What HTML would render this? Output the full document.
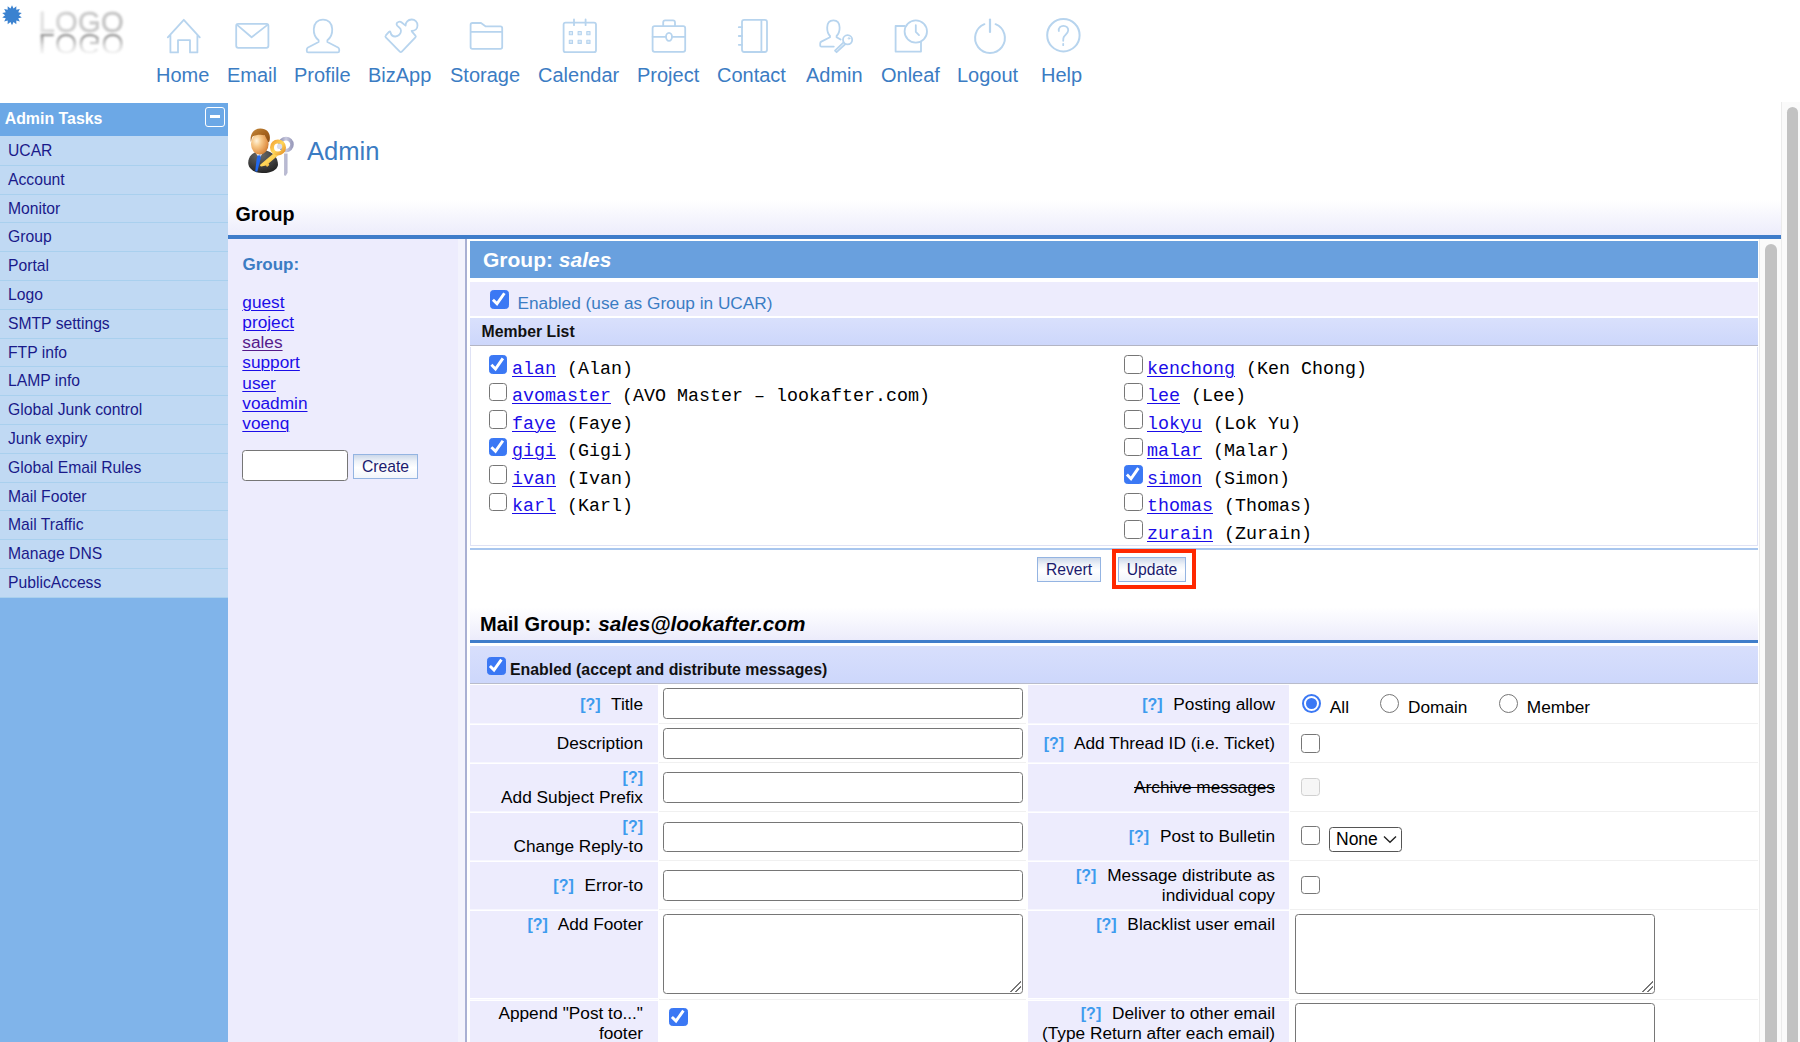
<!DOCTYPE html>
<html><head><meta charset="utf-8"><title>Admin</title>
<style>
*{box-sizing:border-box;margin:0;padding:0}
html,body{width:1800px;height:1042px;overflow:hidden;background:#fff;font-family:"Liberation Sans",sans-serif;}
body{position:relative}
.abs{position:absolute}
#nav .it{position:absolute;top:63.5px;font-size:20px;line-height:22px;color:#3b7cc3;white-space:nowrap}
#nav svg{position:absolute;fill:none;stroke:#b7d4ee;stroke-width:1.8;stroke-linejoin:round;stroke-linecap:round;overflow:visible}
#side{position:absolute;left:0;top:103px;width:228px;height:939px;background:linear-gradient(#c0d9f3,#c0d9f3) 0 0/100% 40px no-repeat,#80b4ea}
#side .hd{height:33.4px;background:#6ca8e6;color:#fff;font-weight:bold;font-size:15.9px;line-height:32px;padding-left:4.7px;position:relative;margin-bottom:0.6px}
#side .hd i{position:absolute;left:205px;top:4.3px;width:20px;height:20px;border:1.5px solid #fff;border-radius:3px}
#side .hd i:after{content:"";position:absolute;left:3.5px;top:7px;width:10px;height:2.5px;background:#fff}
#side .i{height:28.8px;background:#c0d9f3;border-bottom:1.5px solid #a9d0ee;color:#1a1a8a;font-size:15.7px;line-height:28px;padding-left:8px}
a{color:#1b0de8;text-decoration:underline;text-decoration-thickness:1.4px;text-underline-offset:2px}
a.v{color:#551a8b}
.cb{position:absolute;width:18.6px;height:18.6px;border:1.5px solid #767676;border-radius:3.4px;background:#fff}
.cb.on{background:#3b78f4;border-color:#3b78f4}
.cb.on:after{content:"";position:absolute;left:-1.5px;top:-1.5px;width:18.6px;height:18.6px;background:#fff;clip-path:polygon(12.8% 59.3%,41.4% 87.9%,86.5% 23.8%,73.7% 14.9%,39.3% 63.7%,23.8% 48.3%)}
.cb.dis{border-color:#d0d0d0;background:#f6f6f6}
.rd{position:absolute;width:19px;height:19px;border:1.5px solid #767676;border-radius:50%;background:#fff}
.rd.on{border-color:#3b78f4;border-width:2px}
.rd.on:after{content:"";position:absolute;left:2px;top:2px;width:11px;height:11px;border-radius:50%;background:#3b78f4}
.inp{position:absolute;border:1.5px solid #767676;border-radius:3.5px;background:#fff}
.btn{position:absolute;border:1px solid #94b4e2;background:linear-gradient(#ccd8ea 0%,#eef2f8 28%,#fff 55%,#f1f5fb 100%);color:#1a1a6e;font-size:15.7px;text-align:center;line-height:23px;height:25px}
.mono{font-family:"Liberation Mono",monospace;font-size:18.33px;white-space:pre;position:absolute;line-height:20px;color:#000}
.lab{position:absolute;text-align:right;font-size:17.25px;line-height:20px;color:#000;white-space:nowrap}
.lab b{color:#3d9bee;font-weight:bold;font-size:16px;margin-right:6px;line-height:0}
.cellL{position:absolute;background:#edecfd}
.ta:after{content:"";position:absolute;right:1px;bottom:1px;width:11px;height:11px;background:linear-gradient(135deg,transparent 0 48%,#777 48% 56%,transparent 56% 70%,#777 70% 78%,transparent 78%)}
.rt{font-size:17.25px;line-height:20px;color:#000}
.hl{position:absolute;height:1.5px;background:#f0f0f0}
</style></head><body>
<div id="nav">
<div class="it" style="left:156px">Home</div>
<div class="it" style="left:227px">Email</div>
<div class="it" style="left:294px">Profile</div>
<div class="it" style="left:368px">BizApp</div>
<div class="it" style="left:450px">Storage</div>
<div class="it" style="left:538px">Calendar</div>
<div class="it" style="left:637px">Project</div>
<div class="it" style="left:717px">Contact</div>
<div class="it" style="left:806px">Admin</div>
<div class="it" style="left:881px">Onleaf</div>
<div class="it" style="left:957px">Logout</div>
<div class="it" style="left:1041px">Help</div>
<svg width="1100" height="60" viewBox="0 0 1100 60" style="left:0;top:0">
<polygon points="12.00,5.20 13.54,8.47 16.34,6.19 16.30,9.81 19.82,8.97 18.22,12.21 21.75,12.97 18.90,15.20 21.75,17.43 18.22,18.19 19.82,21.43 16.30,20.59 16.34,24.21 13.54,21.93 12.00,25.20 10.46,21.93 7.66,24.21 7.70,20.59 4.18,21.43 5.78,18.19 2.25,17.43 5.10,15.20 2.25,12.97 5.78,12.21 4.18,8.97 7.70,9.81 7.66,6.19 10.46,8.47" fill="#3b82d0" stroke="none"/>
<path d="M167.8 37.3 L183.8 19.8 L199.8 37.3 M170.4 35 V52.4 H178 V40.2 H190 V52.4 H197.4 V35"/>
<rect x="236.2" y="23.8" width="32.2" height="24" rx="2"/><path d="M236.8 24.6 L251.6 37.2 L267.8 24.6"/>
<path d="M318.6 40.2 C315 37.5 313.6 33.5 313.8 29 C314 23.5 317.5 19.6 323 19.6 C328.5 19.6 332 23.5 332.2 29 C332.4 33.5 331 37.5 327.4 40.2 L327.4 42 L338 47.5 Q339.2 48.3 339.2 49.6 V51 Q339.2 52.4 337.8 52.4 H308.2 Q306.8 52.4 306.8 51 V49.6 Q306.8 48.3 308 47.5 L318.6 42 Z"/>
<path d="M386 35.2 L389.2 31.6 Q390 31 390.4 32 C391 35 393 36.6 395.4 36.5 C398.6 36.4 401 33.8 401 30.8 C401 29 400 28 399 27.3 L397.2 25.6 C396 24.4 396.6 22.6 398.3 22 C399.4 21.5 400.6 21.6 401.4 22.2 L405.6 25.6 C405.4 22.4 408 19.6 411.6 19.5 C415 19.4 417.5 22 417.5 25.4 C417.5 28.4 415.2 30.8 411.6 30.8 L412.4 32.2 L415.4 35.6 Q416.2 36.5 415.4 37.4 L401.8 51.6 Q400.8 52.6 399.8 51.6 L385.8 37.4 Q385 36.4 385.8 35.6 Z"/>
<path d="M470.6 24.8 Q470.6 23 472.4 23 H481 L485.8 26.4 H500.4 Q502.2 26.4 502.2 28.2 V47 Q502.2 48.8 500.4 48.8 H472.4 Q470.6 48.8 470.6 47 Z M470.6 31.8 H502.2"/>
<rect x="563.6" y="22.6" width="32.4" height="29.6" rx="2"/><path d="M574 19.4 V25.2 M585.6 19.4 V25.2"/>
<rect x="569.3" y="31.5" width="3.2" height="3.2" style="fill:#dcebf8;stroke-width:1.1"/>
<rect x="569.3" y="40.2" width="3.2" height="3.2" style="fill:#dcebf8;stroke-width:1.1"/>
<rect x="578.1" y="31.5" width="3.2" height="3.2" style="fill:#dcebf8;stroke-width:1.1"/>
<rect x="578.1" y="40.2" width="3.2" height="3.2" style="fill:#dcebf8;stroke-width:1.1"/>
<rect x="586.8" y="31.5" width="3.2" height="3.2" style="fill:#dcebf8;stroke-width:1.1"/>
<rect x="586.8" y="40.2" width="3.2" height="3.2" style="fill:#dcebf8;stroke-width:1.1"/>
<rect x="652.6" y="26.2" width="32.6" height="25.6" rx="2"/><path d="M663.2 26.2 V22.4 Q663.2 20.4 665.2 20.4 H673 Q675 20.4 675 22.4 V26.2 M652.6 36.8 H666 M672 36.8 H685.2"/><ellipse cx="669" cy="36.8" rx="3" ry="4"/>
<rect x="742" y="19.8" width="25" height="32.2" rx="2.2"/><path d="M761.4 19.8 V52 M738.8 27.2 H742 M738.8 36 H742 M738.8 44.8 H742"/>
<path d="M833.8 46.6 H821.4 Q820.2 46.6 820.2 45.4 V43.4 Q820.2 42.2 821.3 41.6 L830 37.2 V36 C828 34 827.1 31.4 827.2 27.6 C827.3 23.2 829.6 20.4 833.4 20.4 C837.2 20.4 839.5 23.2 839.6 27.6 C839.7 31.4 838.6 34 836.6 36 V37.2 L840.6 39.6"/>
<circle cx="847.6" cy="39.8" r="4.6"/><path d="M843.6 42.4 L835 50.6 L836.6 52.2 L845.4 44" /><circle cx="849" cy="38.4" r="0.8" style="stroke-width:1"/>
<path d="M904.6 26 H895.6 V51.6 H921 V41.8"/><circle cx="915.8" cy="31.5" r="11.2"/><path d="M915.8 25.2 V31.9 L919 35.1"/>
<path d="M995.58 24.18 A14.9 14.9 0 1 1 984.42 24.18" style="stroke-width:2"/><path d="M990 19.6 V32" style="stroke-width:2.2"/>
<circle cx="1063.4" cy="35.2" r="16.2" style="stroke-width:2"/><path d="M1058.8 31 C1058.4 27.6 1060.6 25.8 1063.4 25.8 C1066.4 25.8 1068.4 27.8 1068.2 30.4 C1068 33.2 1065.2 34.6 1063.8 37 C1063.2 38.2 1063.2 39.6 1063.2 40.8 M1063.2 43.8 V45.2"/>
</svg>
<div class="abs" style="left:38.4px;top:6px;font-size:29.2px;line-height:32px;font-weight:normal;filter:blur(0.9px);background:linear-gradient(100deg,#e9e9e9 0%,#cfcfcf 35%,#c4c4c4 100%);-webkit-background-clip:text;background-clip:text;color:transparent;-webkit-text-stroke:0.8px transparent;letter-spacing:0.3px">LOGO</div>
<div class="abs" style="left:38.2px;top:27.6px;font-size:29.4px;line-height:32px;transform:scaleY(-1);filter:blur(1px);color:#8a8a8a;letter-spacing:0.3px;-webkit-mask-image:linear-gradient(to top,rgba(0,0,0,0.95) 18%,rgba(0,0,0,0.35) 55%,transparent 88%);mask-image:linear-gradient(to top,rgba(0,0,0,0.95) 18%,rgba(0,0,0,0.35) 55%,transparent 88%)">LOGO</div>
</div>
<div id="side">
<div class="hd">Admin Tasks<i></i></div>
<div class="i">UCAR</div><div class="i">Account</div><div class="i">Monitor</div><div class="i">Group</div><div class="i">Portal</div><div class="i">Logo</div><div class="i">SMTP settings</div><div class="i">FTP info</div><div class="i">LAMP info</div><div class="i">Global Junk control</div><div class="i">Junk expiry</div><div class="i">Global Email Rules</div><div class="i">Mail Footer</div><div class="i">Mail Traffic</div><div class="i">Manage DNS</div><div class="i">PublicAccess</div>
</div>
<svg class="abs" style="left:240px;top:122px" width="64" height="60" viewBox="0 0 64 60">
<defs>
<radialGradient id="sk" cx="0.32" cy="0.35" r="0.75"><stop offset="0" stop-color="#fff3dc"/><stop offset="0.35" stop-color="#f7c98a"/><stop offset="0.8" stop-color="#e2944a"/><stop offset="1" stop-color="#c97a33"/></radialGradient>
<linearGradient id="hr" x1="0" y1="0" x2="1" y2="1"><stop offset="0" stop-color="#c58a3c"/><stop offset="0.5" stop-color="#a8651f"/><stop offset="1" stop-color="#8a4c12"/></linearGradient>
<radialGradient id="st" cx="0.4" cy="0.2" r="0.9"><stop offset="0" stop-color="#6a6a6a"/><stop offset="0.6" stop-color="#3c3c3c"/><stop offset="1" stop-color="#1e1e1e"/></radialGradient>
<linearGradient id="gk" x1="0" y1="0" x2="1" y2="1"><stop offset="0" stop-color="#f3a63a"/><stop offset="0.5" stop-color="#ffd759"/><stop offset="1" stop-color="#e8952a"/></linearGradient>
<linearGradient id="sv" x1="0" y1="0" x2="1" y2="0"><stop offset="0" stop-color="#8f90b2"/><stop offset="0.5" stop-color="#c9cadf"/><stop offset="1" stop-color="#9c9dbd"/></linearGradient>
<filter id="bl"><feGaussianBlur stdDeviation="0.45"/></filter>
</defs>
<g filter="url(#bl)">
<path d="M8.2 41 C8.2 34 13 30.5 18 29.5 L26 28.5 C32 30 38 34.5 38 43 C37 48.5 30 51.5 22 51 C14 50.5 8.6 47 8.2 41 Z" fill="url(#st)"/>
<path d="M15.4 30.6 L19.4 36.4 L23.6 29.6 L20 32.6 Z" fill="#f4f4f6"/>
<path d="M17.6 33.4 L20.4 33.2 L20.8 36 L17.4 49.6 L15.2 49.4 L16.6 37 Z" fill="#2068ee"/>
<ellipse cx="19.8" cy="22" rx="8.8" ry="10.6" fill="url(#sk)"/>
<path d="M10.8 20 C9.6 12 14 6.6 20.4 6.6 C27 6.6 30.6 11.4 29.8 17.2 C29.6 19.2 29 20.4 28.4 20.2 C27 17.4 25.8 15 24.6 13.2 C21 12.2 15.6 12.6 12.6 14.6 C11.8 16 11.4 18 10.8 20 Z" fill="url(#hr)"/>
<path d="M44.4 31.6 V53 Q44.6 54.4 46 53.4 L47.4 51 V31.6 Z" fill="url(#sv)"/>
<circle cx="46" cy="22.6" r="6" fill="none" stroke="url(#sv)" stroke-width="3.6"/>
<path d="M34.6 30.6 L20.4 42.6 Q19.4 44.4 21.4 44.6 L26 43.6 L27 45 L29.4 43 L28.6 41.4 L38 33.6 Z" fill="url(#gk)"/>
<circle cx="38" cy="25.4" r="6" fill="none" stroke="url(#gk)" stroke-width="4"/>
<circle cx="39.6" cy="24.4" r="2.6" fill="#d9dcec"/>
</g>
</svg>
<div class="abs" style="left:307px;top:135.7px;font-size:25.6px;line-height:30px;color:#3b7cc3">Admin</div>
<div class="abs" style="left:228px;top:190px;width:1553px;height:46px;background:linear-gradient(#fff 0%,#fff 20%,#ececfb 100%)"></div>
<div class="abs" style="left:235.5px;top:202px;font-size:19.7px;line-height:24px;font-weight:bold;color:#000">Group</div>
<div class="abs" style="left:228px;top:235.2px;width:1553px;height:3.5px;background:#3f7dca"></div>
<div class="abs" style="left:228px;top:238.5px;width:230px;height:804px;background:#edecfd"></div>
<div class="abs" style="left:458px;top:238.5px;width:8px;height:804px;background:#f3f3fd"></div>
<div class="abs" style="left:464.8px;top:238.5px;width:2.5px;height:804px;background:#a9b0d3"></div>
<div class="abs" style="left:242.5px;top:255.2px;font-size:17px;line-height:20px;font-weight:bold;color:#3b7cc3">Group:</div>
<div class="abs" style="left:242.3px;top:291.90px;font-size:17.25px;line-height:20px"><a>guest</a></div>
<div class="abs" style="left:242.3px;top:312.05px;font-size:17.25px;line-height:20px"><a>project</a></div>
<div class="abs" style="left:242.3px;top:332.20px;font-size:17.25px;line-height:20px"><a class="v">sales</a></div>
<div class="abs" style="left:242.3px;top:352.35px;font-size:17.25px;line-height:20px"><a>support</a></div>
<div class="abs" style="left:242.3px;top:372.50px;font-size:17.25px;line-height:20px"><a>user</a></div>
<div class="abs" style="left:242.3px;top:392.65px;font-size:17.25px;line-height:20px"><a>voadmin</a></div>
<div class="abs" style="left:242.3px;top:412.80px;font-size:17.25px;line-height:20px"><a>voenq</a></div>
<div class="inp" style="left:242px;top:450px;width:106px;height:31px"></div>
<div class="btn" style="left:353px;top:454px;width:65px">Create</div>
<div class="abs" style="left:470px;top:241.2px;width:1288px;height:37.3px;background:#69a0de"></div>
<div class="abs" style="left:483px;top:248px;font-size:21px;line-height:24px;font-weight:bold;color:#fff">Group: <i>sales</i></div>
<div class="abs" style="left:470px;top:282.2px;width:1288px;height:34px;background:#edecfd"></div>
<div class="cb on" style="left:490px;top:290.2px"></div>
<div class="abs" style="left:517.5px;top:292.8px;font-size:17.25px;line-height:20px;color:#3b7cc3">Enabled (use as Group in UCAR)</div>
<div class="abs" style="left:470px;top:318.2px;width:1288px;height:26.5px;background:linear-gradient(#d9e0fc,#cdd7fb)"></div>
<div class="abs" style="left:470px;top:344.5px;width:1288px;height:1.6px;background:#b3b5c4"></div>
<div class="abs" style="left:481.6px;top:322px;font-size:15.8px;line-height:20px;font-weight:bold;color:#111">Member List</div>
<div class="abs" style="left:470px;top:346.5px;width:1288px;height:199px;border:1.5px solid #dfe2f5;border-top:none;background:#fff"></div>
<div class="cb on" style="left:488.5px;top:355.3px"></div><div class="mono" style="left:512px;top:359.8px"><a>alan</a> (Alan)</div>
<div class="cb" style="left:488.5px;top:382.8px"></div><div class="mono" style="left:512px;top:387.3px"><a>avomaster</a> (AVO Master – lookafter.com)</div>
<div class="cb" style="left:488.5px;top:410.2px"></div><div class="mono" style="left:512px;top:414.7px"><a>faye</a> (Faye)</div>
<div class="cb on" style="left:488.5px;top:437.7px"></div><div class="mono" style="left:512px;top:442.2px"><a>gigi</a> (Gigi)</div>
<div class="cb" style="left:488.5px;top:465.1px"></div><div class="mono" style="left:512px;top:469.6px"><a>ivan</a> (Ivan)</div>
<div class="cb" style="left:488.5px;top:492.6px"></div><div class="mono" style="left:512px;top:497.1px"><a>karl</a> (Karl)</div>
<div class="cb" style="left:1124px;top:355.3px"></div><div class="mono" style="left:1147px;top:359.8px"><a>kenchong</a> (Ken Chong)</div>
<div class="cb" style="left:1124px;top:382.8px"></div><div class="mono" style="left:1147px;top:387.3px"><a>lee</a> (Lee)</div>
<div class="cb" style="left:1124px;top:410.2px"></div><div class="mono" style="left:1147px;top:414.7px"><a>lokyu</a> (Lok Yu)</div>
<div class="cb" style="left:1124px;top:437.7px"></div><div class="mono" style="left:1147px;top:442.2px"><a>malar</a> (Malar)</div>
<div class="cb on" style="left:1124px;top:465.1px"></div><div class="mono" style="left:1147px;top:469.6px"><a>simon</a> (Simon)</div>
<div class="cb" style="left:1124px;top:492.6px"></div><div class="mono" style="left:1147px;top:497.1px"><a>thomas</a> (Thomas)</div>
<div class="cb" style="left:1124px;top:520.1px"></div><div class="mono" style="left:1147px;top:524.6px"><a>zurain</a> (Zurain)</div>
<div class="abs" style="left:470px;top:547.5px;width:1288px;height:2.5px;background:#a8c6ee"></div>
<div class="btn" style="left:1037px;top:557px;width:64px">Revert</div>
<div class="btn" style="left:1118px;top:557px;width:68px">Update</div>
<div class="abs" style="left:1112px;top:549px;width:84px;height:40px;border:4px solid #ff2800"></div>
<div class="abs" style="left:470px;top:596px;width:1288px;height:44px;background:linear-gradient(#fff 0%,#fff 25%,#ececfb 100%)"></div>
<div class="abs" style="left:480px;top:612px;font-size:20px;line-height:24px;font-weight:bold;color:#000;white-space:nowrap">Mail Group: <i style="font-size:20.75px;margin-left:1.6px">sales@lookafter.com</i></div>
<div class="abs" style="left:470px;top:640px;width:1288px;height:3px;background:#3f7dca"></div>
<div class="abs" style="left:470px;top:646px;width:1288px;height:36.5px;background:linear-gradient(#d8dffc,#cdd7fb)"></div>
<div class="abs" style="left:470px;top:682.5px;width:1288px;height:1.5px;background:#b9bccb"></div>
<div class="cb on" style="left:487px;top:656.5px"></div>
<div class="abs" style="left:510px;top:659.5px;font-size:15.87px;line-height:20px;font-weight:bold;color:#111">Enabled (accept and distribute messages)</div>
<div class="abs" style="left:1759px;top:239px;width:22px;height:803px;background:#fafafa;border-left:1.5px solid #ebebeb"></div>
<div class="abs" style="left:1765px;top:243.5px;width:11.5px;height:820px;background:#c2c2c2;border-radius:6px"></div>
<div class="abs" style="left:1781px;top:102px;width:19px;height:940px;background:#fafafa;border-left:1.5px solid #ebebeb"></div>
<div class="abs" style="left:1786.8px;top:107px;width:11.5px;height:960px;background:#c2c2c2;border-radius:6px"></div>
<div class="cellL" style="left:470px;top:685px;width:187.5px;height:37.5px"></div>
<div class="cellL" style="left:1028px;top:685px;width:260.5px;height:37.5px"></div>
<div class="cellL" style="left:470px;top:724.5px;width:187.5px;height:37.0px"></div>
<div class="cellL" style="left:1028px;top:724.5px;width:260.5px;height:37.0px"></div>
<div class="cellL" style="left:470px;top:763.5px;width:187.5px;height:47.0px"></div>
<div class="cellL" style="left:1028px;top:763.5px;width:260.5px;height:47.0px"></div>
<div class="cellL" style="left:470px;top:812.5px;width:187.5px;height:47.0px"></div>
<div class="cellL" style="left:1028px;top:812.5px;width:260.5px;height:47.0px"></div>
<div class="cellL" style="left:470px;top:861.5px;width:187.5px;height:47.0px"></div>
<div class="cellL" style="left:1028px;top:861.5px;width:260.5px;height:47.0px"></div>
<div class="cellL" style="left:470px;top:910.5px;width:187.5px;height:87.5px"></div>
<div class="cellL" style="left:1028px;top:910.5px;width:260.5px;height:87.5px"></div>
<div class="cellL" style="left:470px;top:1000.5px;width:187.5px;height:41.5px"></div>
<div class="cellL" style="left:1028px;top:1000.5px;width:260.5px;height:41.5px"></div>
<div class="hl" style="left:659px;top:722.75px;width:367px"></div>
<div class="hl" style="left:1290px;top:722.75px;width:468px"></div>
<div class="hl" style="left:470px;top:722.75px;width:187.5px;background:#f7f7fe"></div>
<div class="hl" style="left:1028px;top:722.75px;width:260.5px;background:#f7f7fe"></div>
<div class="hl" style="left:659px;top:761.75px;width:367px"></div>
<div class="hl" style="left:1290px;top:761.75px;width:468px"></div>
<div class="hl" style="left:470px;top:761.75px;width:187.5px;background:#f7f7fe"></div>
<div class="hl" style="left:1028px;top:761.75px;width:260.5px;background:#f7f7fe"></div>
<div class="hl" style="left:659px;top:810.75px;width:367px"></div>
<div class="hl" style="left:1290px;top:810.75px;width:468px"></div>
<div class="hl" style="left:470px;top:810.75px;width:187.5px;background:#f7f7fe"></div>
<div class="hl" style="left:1028px;top:810.75px;width:260.5px;background:#f7f7fe"></div>
<div class="hl" style="left:659px;top:859.75px;width:367px"></div>
<div class="hl" style="left:1290px;top:859.75px;width:468px"></div>
<div class="hl" style="left:470px;top:859.75px;width:187.5px;background:#f7f7fe"></div>
<div class="hl" style="left:1028px;top:859.75px;width:260.5px;background:#f7f7fe"></div>
<div class="hl" style="left:659px;top:908.75px;width:367px"></div>
<div class="hl" style="left:1290px;top:908.75px;width:468px"></div>
<div class="hl" style="left:470px;top:908.75px;width:187.5px;background:#f7f7fe"></div>
<div class="hl" style="left:1028px;top:908.75px;width:260.5px;background:#f7f7fe"></div>
<div class="hl" style="left:659px;top:998.5px;width:367px"></div>
<div class="hl" style="left:1290px;top:998.5px;width:468px"></div>
<div class="hl" style="left:470px;top:998.5px;width:187.5px;background:#f7f7fe"></div>
<div class="hl" style="left:1028px;top:998.5px;width:260.5px;background:#f7f7fe"></div>
<div class="lab" style="left:243px;width:400px;top:693.8px"><b>[?]</b> Title</div>
<div class="lab" style="left:243px;width:400px;top:733.3px">Description</div>
<div class="lab" style="left:243px;width:400px;top:767.3px"><b style="margin-right:0">[?]</b><br>Add Subject Prefix</div>
<div class="lab" style="left:243px;width:400px;top:816.3px"><b style="margin-right:0">[?]</b><br>Change Reply-to</div>
<div class="lab" style="left:243px;width:400px;top:875.3px"><b>[?]</b> Error-to</div>
<div class="lab" style="left:243px;width:400px;top:913.8px"><b>[?]</b> Add Footer</div>
<div class="lab" style="left:243px;width:400px;top:1003.3px">Append "Post to..."<br>footer</div>
<div class="inp" style="left:663px;top:688px;width:360px;height:31px"></div>
<div class="inp" style="left:663px;top:727.5px;width:360px;height:31px"></div>
<div class="inp" style="left:663px;top:772px;width:360px;height:31px"></div>
<div class="inp" style="left:663px;top:821.5px;width:360px;height:30.5px"></div>
<div class="inp" style="left:663px;top:870px;width:360px;height:31px"></div>
<div class="inp ta" style="left:663px;top:913.8px;width:360px;height:80px"></div>
<div class="cb on" style="left:669px;top:1007.5px"></div>
<div class="lab" style="left:875px;width:400px;top:693.8px"><b>[?]</b> Posting allow</div>
<div class="lab" style="left:875px;width:400px;top:733.3px"><b>[?]</b> Add Thread ID (i.e. Ticket)</div>
<div class="lab" style="left:875px;width:400px;top:777.3px"><span style="text-decoration:line-through">Archive messages</span></div>
<div class="lab" style="left:875px;width:400px;top:825.8px"><b>[?]</b> Post to Bulletin</div>
<div class="lab" style="left:875px;width:400px;top:865.3px"><b>[?]</b> Message distribute as<br>individual copy</div>
<div class="lab" style="left:875px;width:400px;top:913.8px"><b>[?]</b> Blacklist user email</div>
<div class="lab" style="left:875px;width:400px;top:1003.3px"><b>[?]</b> Deliver to other email<br>(Type Return after each email)</div>
<div class="rd on" style="left:1301.8px;top:694.3px"></div><div class="abs rt" style="left:1329.8px;top:696.5px">All</div>
<div class="rd" style="left:1380.2px;top:694.3px"></div><div class="abs rt" style="left:1408px;top:696.5px">Domain</div>
<div class="rd" style="left:1499px;top:694.3px"></div><div class="abs rt" style="left:1526.8px;top:696.5px">Member</div>
<div class="cb" style="left:1301px;top:734.2px"></div>
<div class="cb dis" style="left:1301px;top:777.8px"></div>
<div class="cb" style="left:1301px;top:826.3px"></div>
<div class="inp" style="left:1329px;top:827px;width:73px;height:24.5px;border-color:#555;font-size:17.5px;line-height:22px;padding-left:6px">None<svg style="position:absolute;left:53px;top:7px" width="14" height="9" viewBox="0 0 14 9"><path d="M1 1.5 L7 7.2 L13 1.5" fill="none" stroke="#222" stroke-width="1.4"/></svg></div>
<div class="cb" style="left:1301px;top:875.8px"></div>
<div class="inp ta" style="left:1295px;top:913.8px;width:360px;height:80px"></div>
<div class="inp" style="left:1295px;top:1003px;width:360px;height:60px"></div>
</body></html>
